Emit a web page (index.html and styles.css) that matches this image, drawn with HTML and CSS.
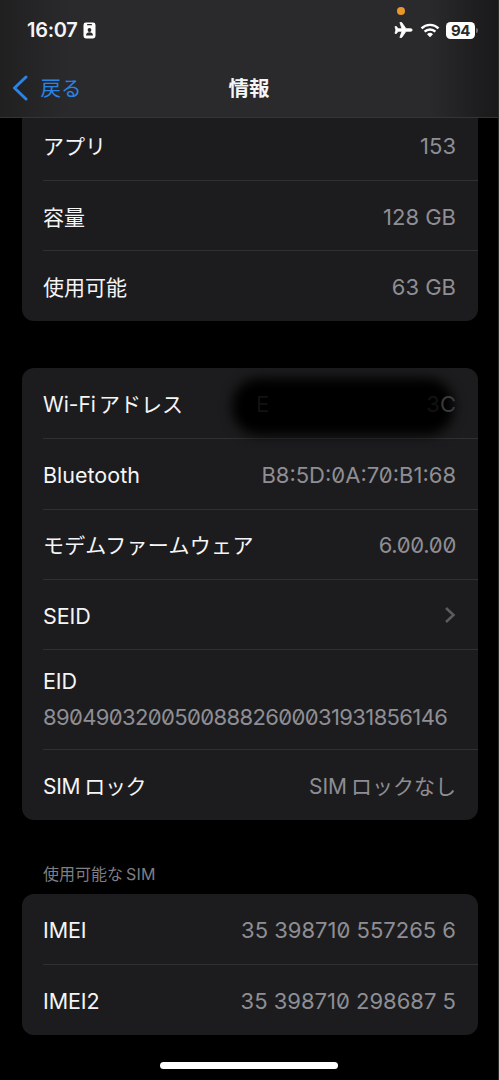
FILE: index.html
```html
<!DOCTYPE html>
<html lang="ja">
<head>
  <meta charset="utf-8">
  <title>情報</title>
  <link rel="stylesheet" href="styles.css">
</head>
<body>
  <div id="phone">
    <header>
      <div class="status">
        <span class="time">16:07</span>
        <svg class="id-card" width="13" height="17" viewBox="0 0 13 17">
          <rect x="0.5" y="0.5" width="12" height="16" rx="2.4" fill="#fff"/>
          <rect x="4" y="2" width="5" height="1.3" rx="0.6" fill="#2a2a2c"/>
          <circle cx="6.5" cy="8" r="1.9" fill="#2a2a2c"/>
          <path d="M3 13.6c0-4.4 7-4.4 7 0z" fill="#2a2a2c"/>
        </svg>
        <i class="mic-dot"></i>
        <svg class="plane" width="19" height="18" viewBox="0 0 19 18">
          <path d="M18.3 9c0 .8-1.1 1.3-2.3 1.3h-4L7.7 16.5H5.9L8 10.3H4.1L2.5 12.4H1L1.9 9 1 5.6h1.5L4.1 7.7H8L5.9 1.5h1.8L12 7.7h4c1.2 0 2.3.5 2.3 1.3z" fill="#fff" stroke="#fff" stroke-width="0.8" stroke-linejoin="round"/>
        </svg>
        <svg class="wifi" width="20" height="15" viewBox="0 0 20 15">
          <path d="M1.5 5.3a12.2 12.2 0 0 1 17 0M4.6 8.6a7.8 7.8 0 0 1 10.8 0" fill="none" stroke="#fff" stroke-width="2.4"/>
          <path d="M10 14.2 7 11.2a4.3 4.3 0 0 1 6 0z" fill="#fff"/>
        </svg>
        <span class="battery">94</span>
        <i class="battery-tip"></i>
      </div>
      <nav>
        <a class="back">
          <svg width="16" height="26" viewBox="0 0 16 26">
            <path d="M14 2 2.5 13 14 24" fill="none" stroke="#2a84e4" stroke-width="3" stroke-linecap="round" stroke-linejoin="round"/>
          </svg>
          <span>戻る</span>
        </a>
        <h1>情報</h1>
      </nav>
    </header>

    <main>
      <section class="card clipped">
        <div class="row"><span>アプリ</span><span class="value number">153</span></div>
        <div class="row"><span>容量</span><span class="value number">128 GB</span></div>
        <div class="row"><span>使用可能</span><span class="value number">63 GB</span></div>
      </section>

      <section class="card">
        <div class="row redacted">
          <span><span class="wi-fi">Wi-Fi</span>アドレス</span>
          <span class="value number masked"><span>E</span><span>3<b>C</b></span></span>
        </div>
        <div class="row"><span class="bluetooth">Bluetooth</span><span class="value number mac">B8:5D:0A:70:B1:68</span></div>
        <div class="row"><span class="modem">モデムファームウェア</span><span class="value number firmware">6.00.00</span></div>
        <div class="row">
          <span class="latin">SEID</span>
          <svg class="chevron" width="12" height="18" viewBox="0 0 12 18">
            <path d="M2 2l7.5 7L2 16" fill="none" stroke="#5c5c60" stroke-width="2.5"/>
          </svg>
        </div>
        <div class="row tall">
          <span class="latin">EID</span>
          <span class="value number eid">89049032005008882600031931856146</span>
        </div>
        <div class="row"><span class="lock"><span class="sim">SIM</span>ロック</span><span class="value"><span class="sim">SIM</span>ロックなし</span></div>
      </section>

      <h2>使用可能な<span>SIM</span></h2>
      <section class="card">
        <div class="row"><span class="latin">IMEI</span><span class="value number imei">35 398710 557265 6</span></div>
        <div class="row"><span class="latin">IMEI2</span><span class="value number imei">35 398710 298687 5</span></div>
      </section>
    </main>

    <div class="home-bar"></div>
  </div>
</body>
</html>
```

FILE: styles.css
```css
* {
  box-sizing: border-box;
}
body {
  margin: 0;
  background: #000;
  color: #f5f5f7;
  font-family: Inter, "Noto Sans CJK JP", sans-serif;
  font-size: 21px;
  line-height: 30px;
}
#phone {
  width: 499px;
  height: 1080px;
  overflow: hidden;
  display: flex;
  flex-direction: column;
  border-right: 1px solid #2c2c2c;
}
header {
  height: 118px;
  flex: none;
  background: linear-gradient(90deg, #202021, #2a2a2c 14%, #2a2a2c 86%, #19191a);
  border-bottom: 1px solid #343436;
}
.status {
  height: 60px;
  padding-left: 27px;
  padding-right: 20px;
  display: flex;
  align-items: center;
  position: relative;
}
.time {
  font-size: 20px;
  font-weight: 600;
  letter-spacing: -0.3px;
  width: 56px;
}
.plane {
  margin-left: auto;
}
.wifi {
  margin-left: 7px;
}
.battery {
  width: 29px;
  height: 17px;
  margin-left: 6px;
  border-radius: 4.5px;
  background: #fff;
  color: #2a2a2c;
  font-size: 15px;
  line-height: 17px;
  font-weight: 700;
  letter-spacing: -0.4px;
  text-align: center;
}
.battery-tip {
  width: 2px;
  height: 5px;
  margin-left: 1px;
  border-radius: 0 2px 2px 0;
  background: #6a6a6c;
}
.mic-dot {
  position: absolute;
  left: 397px;
  top: 7px;
  width: 8px;
  height: 8px;
  border-radius: 50%;
  background: #e8962e;
}
nav {
  display: grid;
  grid-template-columns: 1fr auto 1fr;
  align-items: center;
  height: 56px;
}
.back {
  display: flex;
  align-items: center;
  gap: 12.5px;
  padding-left: 12px;
  font-size: 20.5px;
  color: #2a84e4;
}
.back span, h1 {
  padding-top: 2px;
}
h1 {
  margin: 0;
  font-size: 20.5px;
  font-weight: 700;
}
.card {
  width: 456px;
  margin-left: 21.5px;
  background: #1c1c1e;
  border-radius: 12px;
}
.card.clipped {
  border-radius: 0 0 12px 12px;
  margin-bottom: 47px;
}
.row {
  height: 70.4px;
  margin-left: 21.5px;
  padding-top: 4px;
  padding-right: 21.5px;
  display: flex;
  align-items: center;
  justify-content: space-between;
  white-space: nowrap;
}
.row + .row {
  border-top: 1px solid #303033;
}
.clipped .row:first-child {
  height: 62px;
  padding-top: 0;
  padding-bottom: 4px;
}
.value {
  color: #8e8e94;
}
.number {
  font-size: 22px;
  padding-bottom: 2px;
}
.mac, .firmware, .eid, .imei {
  font-feature-settings: "zero";
}
.firmware {
  letter-spacing: -0.3px;
}
.number.eid {
  padding-bottom: 0;
  letter-spacing: -0.63px;
}
.bluetooth {
  font-size: 21.5px;
  padding-bottom: 2px;
}
.latin {
  font-size: 21.5px;
  letter-spacing: -0.1px;
  padding-bottom: 2px;
}
.modem {
  letter-spacing: 0.3px;
}
.wi-fi {
  margin-right: 3px;
}
.sim {
  margin-right: 4px;
}
.lock {
  letter-spacing: -0.3px;
}
.chevron {
  margin-top: -3px;
}
.redacted {
  position: relative;
}
.redacted::after {
  content: "";
  position: absolute;
  left: 189px;
  top: 10px;
  width: 222px;
  height: 57px;
  border-radius: 27px;
  background: #000;
  filter: blur(6px);
}
/* faint leftovers of the address show through the marker */
.masked {
  position: relative;
  z-index: 1;
  display: flex;
  justify-content: space-between;
  width: 200px;
  color: #121213;
}
.masked b {
  font-weight: 400;
  color: #3a3a3c;
}
.row.tall {
  height: 100px;
  padding-top: 0;
  padding-bottom: 2px;
  flex-direction: column;
  align-items: flex-start;
  justify-content: center;
  gap: 4px;
}
h2 {
  margin: 41px 0 7px 43px;
  font-size: 16px;
  line-height: 26px;
  font-weight: 400;
  color: #7e7e84;
}
h2 span {
  margin-left: 3px;
  letter-spacing: 0.2px;
}
.home-bar {
  width: 178px;
  height: 7px;
  margin: 27.5px auto 0;
  border-radius: 4px;
  background: #fff;
}
```
